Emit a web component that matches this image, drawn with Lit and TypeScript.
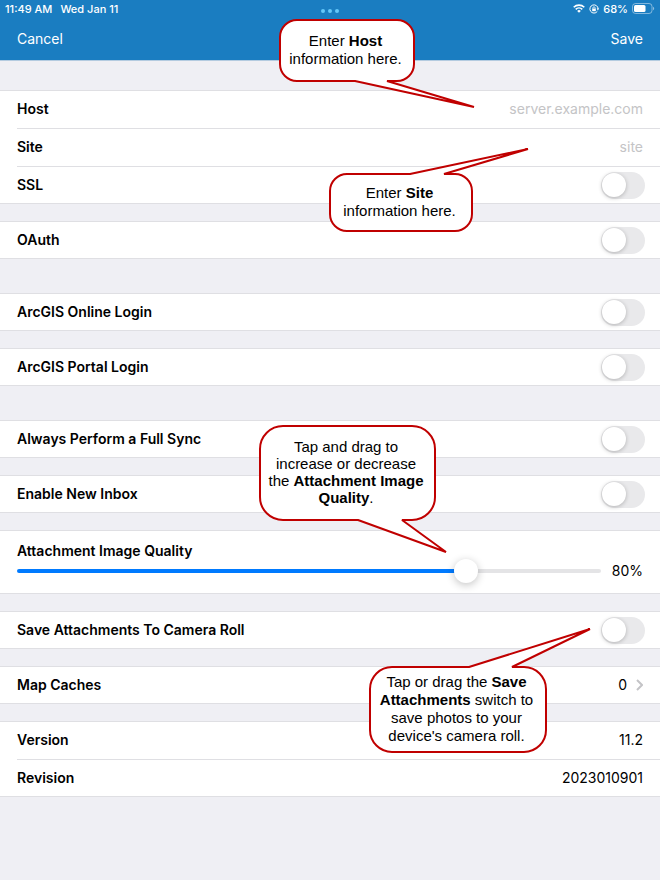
import { LitElement, html, svg, css, TemplateResult } from "lit";
import { customElement, property, state } from "lit/decorators.js";

type Row = { label: string; kind: "switch" | "text" | "value" | "link" | "slider"; value?: string };
type Group = { spaced?: boolean; rows: Row[] };

const GROUPS: Group[] = [
  {
    rows: [
      { label: "Host", kind: "text", value: "server.example.com" },
      { label: "Site", kind: "text", value: "site" },
      { label: "SSL", kind: "switch" },
    ],
  },
  { rows: [{ label: "OAuth", kind: "switch" }] },
  { spaced: true, rows: [{ label: "ArcGIS Online Login", kind: "switch" }] },
  { rows: [{ label: "ArcGIS Portal Login", kind: "switch" }] },
  { spaced: true, rows: [{ label: "Always Perform a Full Sync", kind: "switch" }] },
  { rows: [{ label: "Enable New Inbox", kind: "switch" }] },
  { rows: [{ label: "Attachment Image Quality", kind: "slider" }] },
  { rows: [{ label: "Save Attachments To Camera Roll", kind: "switch" }] },
  { rows: [{ label: "Map Caches", kind: "link", value: "0" }] },
  {
    rows: [
      { label: "Version", kind: "value", value: "11.2" },
      { label: "Revision", kind: "value", value: "2023010901" },
    ],
  },
];

/** Speech balloon: a rounded box with a pointer leaving its top or bottom edge. */
@customElement("call-out")
export class CallOut extends LitElement {
  @property({ type: Number }) w = 100;
  @property({ type: Number }) h = 60;
  @property({ type: Number }) r = 16;
  @property() side: "top" | "bottom" = "bottom";
  /** Pointer as [left foot x, right foot x, tip x, tip y], from the box's corner. */
  @property({ type: Array }) tip: number[] = [0, 0, 0, 0];

  static styles = css`
    :host {
      display: block;
      position: absolute;
      pointer-events: none;
    }
    .shape {
      display: block;
      overflow: visible;
    }
    .text {
      position: absolute;
      inset: 0;
      padding: 0 3px 2px 0;
      display: flex;
      align-items: center;
      justify-content: center;
      text-align: center;
      white-space: nowrap;
    }
  `;

  private outline(): string {
    const { w, h, r } = this;
    const [a, b, x, y] = this.tip;
    const R = w - 1;
    const B = h - 1;
    const top = this.side === "top" ? `L${a} 1L${x} ${y}L${b} 1` : "";
    const bottom = this.side === "bottom" ? `L${b} ${B}L${x} ${y}L${a} ${B}` : "";
    return (
      `M${1 + r} 1${top}L${R - r} 1A${r} ${r} 0 0 1 ${R} ${1 + r}L${R} ${B - r}` +
      `A${r} ${r} 0 0 1 ${R - r} ${B}${bottom}L${1 + r} ${B}A${r} ${r} 0 0 1 1 ${B - r}` +
      `L1 ${1 + r}A${r} ${r} 0 0 1 ${1 + r} 1Z`
    );
  }

  render() {
    return html`
      <svg class="shape" width=${this.w} height=${this.h} aria-hidden="true">
        ${svg`<path d=${this.outline()} fill="#fff" stroke="#c00000" stroke-width="2" stroke-linejoin="bevel" />`}
      </svg>
      <div class="text"><div><slot></slot></div></div>
    `;
  }
}

@customElement("app-root")
export class AppRoot extends LitElement {
  @state() private quality = 78;

  static styles = css`
    :host {
      display: block;
      position: relative;
      min-height: 100vh;
      background: #efeff4;
      color: #000;
      font: 14px/20px Inter, "Liberation Sans", sans-serif;
    }
    .bar {
      background: #1a7dc1;
      color: #fff;
      height: 60px;
      box-shadow: 0 1px 0 #b4cbe0;
      display: flex;
      flex-direction: column;
      box-sizing: border-box;
    }
    .status {
      display: grid;
      grid-template-columns: 1fr auto 1fr;
      align-items: center;
      height: 17px;
      padding: 0 5px;
      font-size: 11px;
      line-height: 16px;
      font-weight: 500;
    }
    .clock {
      display: flex;
      gap: 8px;
    }
    .dots {
      display: flex;
      gap: 3px;
      padding-top: 4px;
    }
    .dot {
      width: 4px;
      height: 4px;
      border-radius: 50%;
      background: #64c8fa;
    }
    .signals {
      display: flex;
      justify-content: flex-end;
      align-items: center;
      gap: 4px;
    }
    .signals svg {
      display: block;
    }
    .nav {
      flex: 1;
      display: flex;
      justify-content: space-between;
      align-items: center;
      padding: 0 17px;
    }
    .nav button {
      all: unset;
      cursor: pointer;
    }
    .groups {
      padding: 30px 0;
      display: flex;
      flex-direction: column;
      gap: 17px;
    }
    .group {
      background: #fff;
      box-shadow: inset 0 1px 0 #dfdfe3, inset 0 -1px 0 #dfdfe3;
    }
    .spaced {
      margin-top: 17px;
    }
    .row {
      display: flex;
      align-items: center;
      justify-content: space-between;
      height: 38px;
      padding-right: 17px;
      margin-left: 17px;
      color: inherit;
      text-decoration: none;
    }
    .row + .row {
      box-shadow: inset 0 1px 0 #dfdfe3;
    }
    .label {
      font-weight: 600;
    }
    .field {
      flex: 1;
      min-width: 0;
      border: 0;
      outline: 0;
      padding: 0;
      background: none;
      font: inherit;
      text-align: right;
    }
    .field::placeholder {
      color: #c4c4c6;
      opacity: 1;
    }
    .switch {
      appearance: none;
      margin: 0 -2px 0 0;
      width: 44px;
      height: 27px;
      border-radius: 14px;
      background: #e9e9eb;
      display: flex;
      align-items: center;
      padding: 0 1px;
      box-sizing: border-box;
      cursor: pointer;
    }
    .switch::before {
      content: "";
      width: 24px;
      height: 24px;
      border-radius: 50%;
      background: #fff;
      box-shadow: 0 1px 4px rgba(0, 0, 0, 0.24);
    }
    .switch:checked {
      background: #34c759;
      justify-content: flex-end;
    }
    .more {
      display: flex;
      align-items: center;
      gap: 9px;
    }
    .more svg {
      display: block;
    }
    .quality {
      padding: 11px 17px 13px;
      display: grid;
      grid-template-columns: 1fr auto;
      column-gap: 11px;
      align-items: center;
    }
    .quality .label {
      grid-column: 1 / -1;
    }
    .slider {
      appearance: none;
      width: 100%;
      height: 20px;
      margin: 0;
      background: none;
    }
    .slider::-webkit-slider-runnable-track {
      height: 4px;
      border-radius: 2px;
      background: linear-gradient(to right, #007aff var(--fill), #e4e4e6 var(--fill));
    }
    .slider::-webkit-slider-thumb {
      appearance: none;
      width: 24px;
      height: 24px;
      margin-top: -10px;
      border-radius: 50%;
      background: #fff;
      box-shadow: 0 2px 8px rgba(0, 0, 0, 0.24);
    }
    call-out {
      font: 15px/18px "Liberation Sans", Arial, sans-serif;
    }
    .c-host {
      top: 19px;
      right: 245px;
    }
    .c-site {
      top: 173px;
      right: 187px;
    }
    .c-quality {
      top: 425px;
      right: 224px;
      line-height: 17px;
    }
    .c-save {
      top: 666px;
      right: 113px;
    }
  `;

  private onQuality(e: Event) {
    this.quality = Number((e.target as HTMLInputElement).value);
  }

  private renderRow(row: Row, id: string): TemplateResult {
    switch (row.kind) {
      case "text":
        return html`<div class="row">
          <label class="label" for=${id}>${row.label}</label>
          <input class="field" id=${id} type="text" placeholder=${row.value ?? ""} />
        </div>`;
      case "switch":
        return html`<div class="row">
          <label class="label" for=${id}>${row.label}</label>
          <input class="switch" id=${id} type="checkbox" role="switch" />
        </div>`;
      case "slider":
        return html`<div class="quality">
          <label class="label" for=${id}>${row.label}</label>
          <input
            class="slider"
            id=${id}
            type="range"
            min="0"
            max="100"
            .value=${String(this.quality)}
            style="--fill: ${this.quality}%"
            @input=${this.onQuality}
          />
          <output for=${id}>${Math.round(this.quality / 10) * 10}%</output>
        </div>`;
      case "link":
        return html`<a class="row" href="#caches">
          <span class="label">${row.label}</span>
          <span class="more">
            ${row.value}
            <svg width="7" height="12" viewBox="0 0 7 12" fill="none" stroke="#c4c4c7" stroke-width="2" aria-hidden="true">
              <path d="M1 1l5 5-5 5" />
            </svg>
          </span>
        </a>`;
      default:
        return html`<div class="row">
          <span class="label">${row.label}</span>
          <span>${row.value}</span>
        </div>`;
    }
  }

  render() {
    return html`
      <header class="bar">
        <div class="status">
          <div class="clock"><span>11:49 AM</span><span>Wed Jan 11</span></div>
          <div class="dots"><i class="dot"></i><i class="dot"></i><i class="dot"></i></div>
          <div class="signals">
            <svg width="12" height="9" viewBox="0 0 12 9" aria-hidden="true">
              <path d="M.7 3.3a7.6 7.6 0 0 1 10.6 0" fill="none" stroke="#fff" stroke-width="1.6" />
              <path d="M2.7 5.4a4.7 4.7 0 0 1 6.6 0" fill="none" stroke="#fff" stroke-width="1.5" />
              <path d="M6 8.8L4.2 6.9a2.6 2.6 0 0 1 3.6 0z" fill="#fff" />
            </svg>
            <svg width="10" height="10" viewBox="0 0 10 10" fill="none" stroke="#fff" aria-hidden="true">
              <path d="M8.3 7.4A4.1 4.1 0 1 1 9.1 5" stroke-width="1" />
              <path d="M7.7 4.6h2.3L8.9 6.4z" fill="#fff" stroke="none" />
              <rect x="3.2" y="4.6" width="3.6" height="2.6" fill="#fff" stroke="none" />
              <path d="M3.9 4.8v-.9a1.1 1.1 0 0 1 2.2 0v.9" stroke-width=".8" />
            </svg>
            <span>68%</span>
            <svg width="23" height="11" viewBox="0 0 23 11" aria-hidden="true">
              <rect x=".5" y=".5" width="19.5" height="10" rx="3" fill="none" stroke="#fff" stroke-opacity=".45" />
              <rect x="2" y="2" width="11.5" height="7" rx="1.5" fill="#fff" />
              <path d="M21 3.8v3.4c1.6-.5 1.6-2.9 0-3.4z" fill="#fff" fill-opacity=".5" />
            </svg>
          </div>
        </div>
        <nav class="nav">
          <button type="button">Cancel</button>
          <button type="button">Save</button>
        </nav>
      </header>

      <main class="groups">
        ${GROUPS.map(
          (g, i) => html`<section class="group ${g.spaced ? "spaced" : ""}">
            ${g.rows.map((r, j) => this.renderRow(r, `f${i}-${j}`))}
          </section>`
        )}
      </main>

      <call-out class="c-host" .w=${136} .h=${63} .r=${17} .tip=${[76, 108, 195, 88]}>
        Enter <b>Host</b><br />information here.
      </call-out>
      <call-out class="c-site" .w=${144} .h=${59} .r=${17} side="top" .tip=${[81, 115, 199, -24]}>
        Enter <b>Site</b><br />information here.
      </call-out>
      <call-out class="c-quality" .w=${177} .h=${96} .r=${23} .tip=${[99, 143, 187, 127]}>
        Tap and drag to<br />increase or decrease<br />the <b>Attachment Image<br />Quality</b>.
      </call-out>
      <call-out class="c-save" .w=${178} .h=${87} .r=${22} side="top" .tip=${[100, 143, 221, -37]}>
        Tap or drag the <b>Save<br />Attachments</b> switch to<br />save photos to your<br />device's camera roll.
      </call-out>
    `;
  }
}
